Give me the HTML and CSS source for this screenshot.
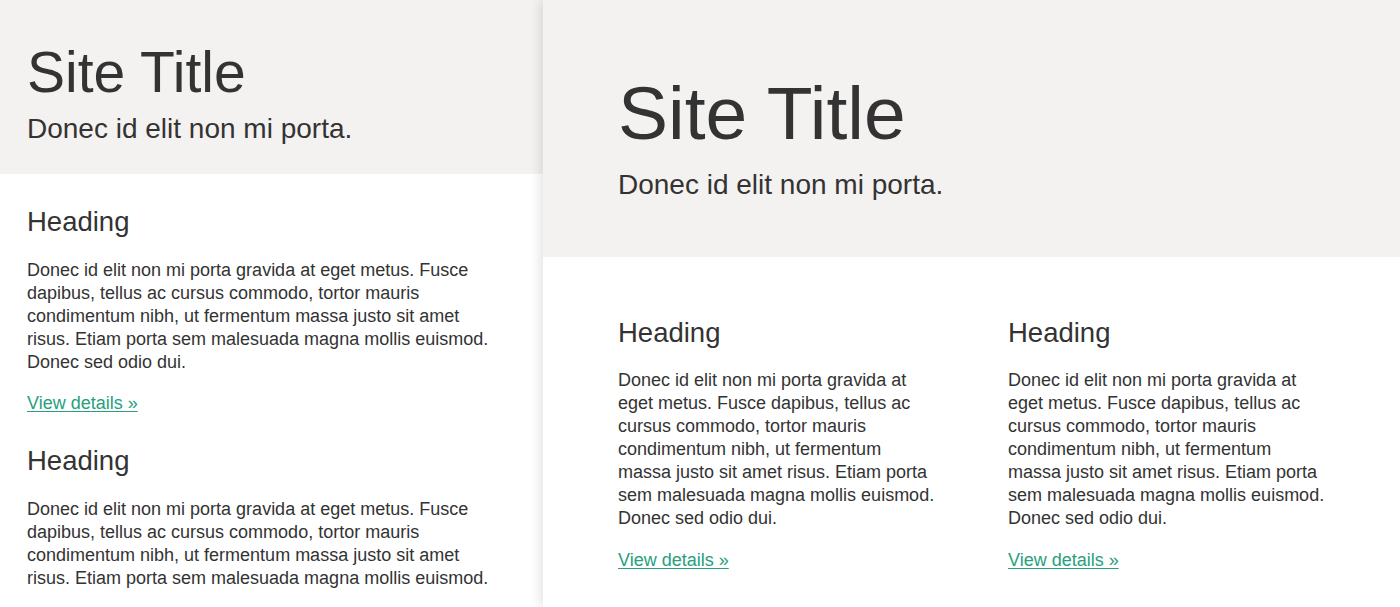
FILE: index.html
```html
<!DOCTYPE html>
<html>
<head>
<meta charset="utf-8">
<link rel="stylesheet" href="styles.css">
</head>
<body>
<div class="stage">
  <section class="pane pane-mobile">
    <header class="jumbo jumbo-mobile">
      <h1 class="title title-mobile">Site Title</h1>
      <p class="lead">Donec id elit non mi porta.</p>
    </header>
    <main class="content content-mobile">
      <article class="feature">
        <h2 class="heading">Heading</h2>
        <p class="text">Donec id elit non mi porta gravida at eget metus. Fusce dapibus, tellus ac cursus commodo, tortor mauris condimentum nibh, ut fermentum massa justo sit amet risus. Etiam porta sem malesuada magna mollis euismod. Donec sed odio dui.</p>
        <p class="more"><a href="#" class="link">View details »</a></p>
      </article>
      <article class="feature">
        <h2 class="heading">Heading</h2>
        <p class="text">Donec id elit non mi porta gravida at eget metus. Fusce dapibus, tellus ac cursus commodo, tortor mauris condimentum nibh, ut fermentum massa justo sit amet risus. Etiam porta sem malesuada magna mollis euismod. Donec sed odio dui.</p>
        <p class="more"><a href="#" class="link">View details »</a></p>
      </article>
    </main>
  </section>
  <section class="pane pane-desktop">
    <header class="jumbo jumbo-desktop">
      <h1 class="title title-desktop">Site Title</h1>
      <p class="lead">Donec id elit non mi porta.</p>
    </header>
    <main class="content content-desktop">
      <article class="col">
        <h2 class="heading">Heading</h2>
        <p class="text">Donec id elit non mi porta gravida at eget metus. Fusce dapibus, tellus ac cursus commodo, tortor mauris condimentum nibh, ut fermentum massa justo sit amet risus. Etiam porta sem malesuada magna mollis euismod. Donec sed odio dui.</p>
        <p class="more"><a href="#" class="link">View details »</a></p>
      </article>
      <article class="col">
        <h2 class="heading">Heading</h2>
        <p class="text">Donec id elit non mi porta gravida at eget metus. Fusce dapibus, tellus ac cursus commodo, tortor mauris condimentum nibh, ut fermentum massa justo sit amet risus. Etiam porta sem malesuada magna mollis euismod. Donec sed odio dui.</p>
        <p class="more"><a href="#" class="link">View details »</a></p>
      </article>
    </main>
  </section>
</div>
</body>
</html>
```

FILE: styles.css
```css
html, body {
  margin: 0;
  padding: 0;
  background: #ffffff;
}

body {
  font-family: "Liberation Sans", Arial, sans-serif;
  color: #333333;
  font-size: 18px;
  line-height: 23px;
  overflow: hidden;
}

.stage {
  display: flex;
  width: 1400px;
  height: 607px;
  overflow: hidden;
}

.pane {
  display: flex;
  flex-direction: column;
  height: 607px;
  background: #ffffff;
  overflow: hidden;
}

.pane-mobile {
  width: 543px;
  flex: 0 0 543px;
}

.pane-desktop {
  flex: 1 1 auto;
  position: relative;
  z-index: 1;
  overflow: visible;
  box-shadow: -2px 0 11px rgba(0, 0, 0, 0.13);
}

.jumbo {
  flex: 0 0 auto;
  background: #f3f2f1;
}

.jumbo-mobile {
  height: 174px;
  box-sizing: border-box;
  padding: 40.9px 27px 0;
}

.jumbo-desktop {
  height: 257px;
  box-sizing: border-box;
  padding: 71.8px 75px 0;
}

.title {
  margin: 0;
  font-weight: 400;
  line-height: 1.1;
}

.title-mobile {
  font-size: 57px;
}

.title-desktop {
  font-size: 75px;
}

.lead {
  margin: 6.8px 0 0;
  font-size: 28px;
  line-height: 37.8px;
}

.title-desktop + .lead {
  margin-top: 12.1px;
}

.content {
  flex: 0 0 auto;
}

.content-mobile {
  height: 416px;
  box-sizing: border-box;
  overflow: hidden;
  padding: 32.8px 46px 0 27px;
}

.feature + .feature {
  margin-top: 31.5px;
}

.content-desktop {
  display: grid;
  grid-template-columns: 318px 318px;
  column-gap: 72px;
  padding: 60.5px 75px 0;
}

.heading {
  margin: 0 0 22.5px;
  font-size: 27.5px;
  font-weight: 400;
  line-height: 29.7px;
}

.content-desktop .heading {
  margin-bottom: 21.8px;
}

.text {
  margin: 0;
}

.more {
  margin: 18.5px 0 0;
}

.content-mobile .more {
  margin-top: 17.5px;
}

.content-desktop .more {
  margin-top: 19px;
}

.link {
  color: #27a07e;
  text-decoration: underline;
  text-underline-offset: 2px;
}
```
